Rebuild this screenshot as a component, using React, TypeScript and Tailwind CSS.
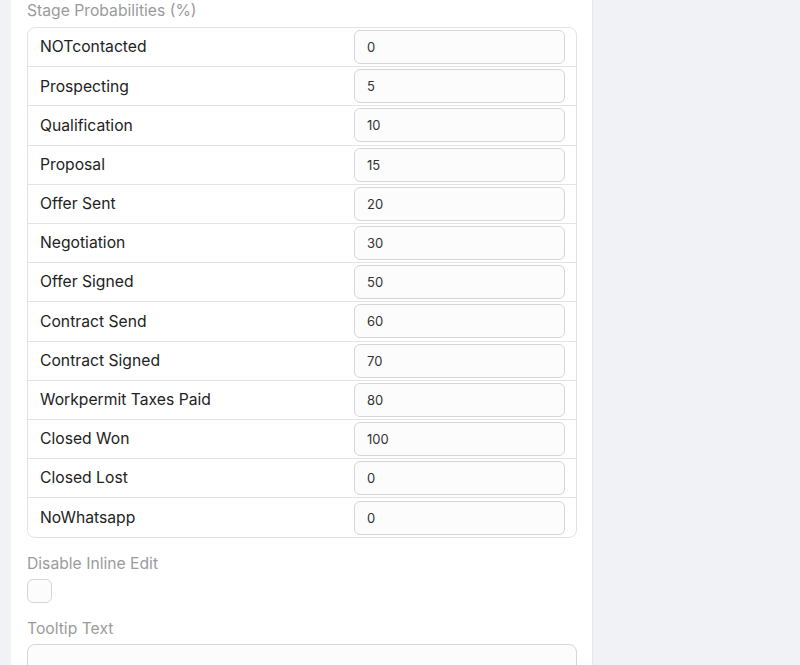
const stages = [
  { name: 'NOTcontacted', value: '0' },
  { name: 'Prospecting', value: '5' },
  { name: 'Qualification', value: '10' },
  { name: 'Proposal', value: '15' },
  { name: 'Offer Sent', value: '20' },
  { name: 'Negotiation', value: '30' },
  { name: 'Offer Signed', value: '50' },
  { name: 'Contract Send', value: '60' },
  { name: 'Contract Signed', value: '70' },
  { name: 'Workpermit Taxes Paid', value: '80' },
  { name: 'Closed Won', value: '100' },
  { name: 'Closed Lost', value: '0' },
  { name: 'NoWhatsapp', value: '0' },
];

export default function App() {
  return (
    <div
      className="flex h-[665px] w-[800px] overflow-hidden bg-[#f1f2f5]"
      style={{ fontFamily: 'Inter, "Noto Sans", sans-serif' }}
    >
      <div className="ml-[11px] h-full w-[582px] border-r border-[#e6e7eb] bg-white px-4 pt-[1px]">
        {/* Stage probabilities */}
        <div className="text-[15.7px] leading-5 text-[#9b9b9b]">Stage Probabilities (%)</div>
        <div className="mt-[6px] w-[550px] overflow-hidden rounded-lg border border-[#e3e3e3]">
          {stages.map((s, i) => (
            <div
              key={s.name}
              className={`flex h-[39.2px] items-center justify-between pl-3 pr-[11px] ${i < stages.length - 1 ? 'border-b border-[#e3e3e3]' : ''}`}
            >
              <span className="text-[15.7px] text-[#222]">{s.name}</span>
              <input
                readOnly
                value={s.value}
                className="h-[34px] w-[211px] rounded-md border border-[#d6d6d6] bg-[#fcfcfc] px-3 text-[13px] text-[#333] outline-none"
              />
            </div>
          ))}
        </div>

        {/* Disable inline edit */}
        <div className="mt-4 text-[15.7px] leading-5 text-[#9b9b9b]">Disable Inline Edit</div>
        <div className="mt-[5px] h-[24px] w-[25px] rounded-[6px] border border-[#d6d6d6] bg-[#fcfcfc]" />

        {/* Tooltip */}
        <div className="mt-[16px] text-[15.7px] leading-5 text-[#9b9b9b]">Tooltip Text</div>
        <div className="mt-[5px] h-[60px] w-[550px] rounded-lg border border-[#d6d6d6] bg-[#fcfcfc]" />
      </div>
    </div>
  );
}
